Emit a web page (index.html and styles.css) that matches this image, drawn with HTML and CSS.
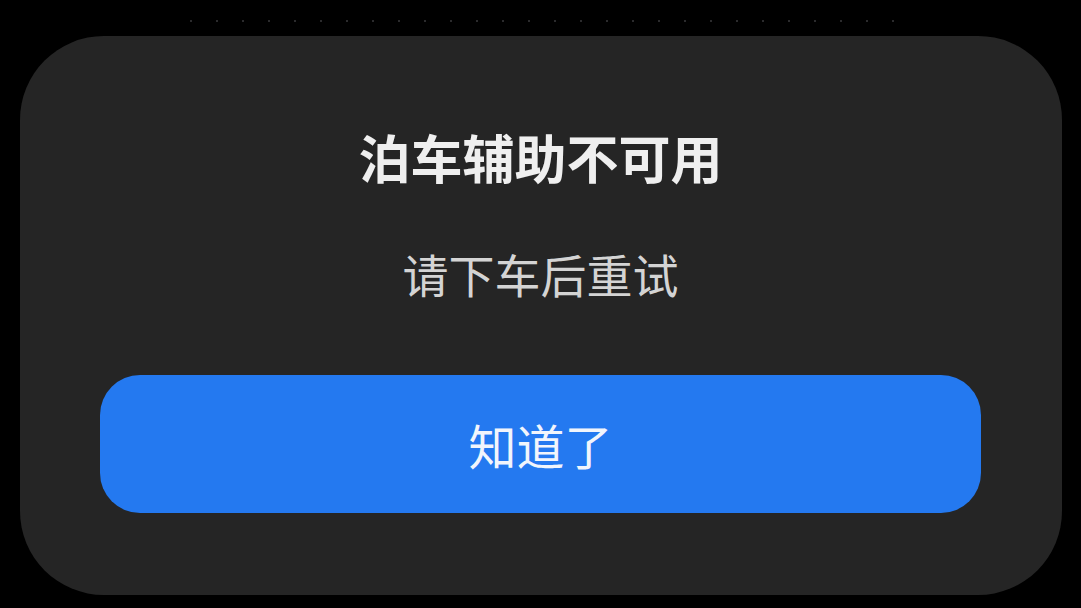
FILE: index.html
```html
<!DOCTYPE html>
<html lang="zh-CN">
<head>
<meta charset="utf-8">
<title>泊车辅助不可用</title>
<link rel="stylesheet" href="styles.css">
</head>
<body>
<div class="screen">
  <div class="dots">
    <span></span><span></span><span></span><span></span><span></span><span></span><span></span>
    <span></span><span></span><span></span><span></span><span></span><span></span><span></span>
    <span></span><span></span><span></span><span></span><span></span><span></span><span></span>
    <span></span><span></span><span></span><span></span><span></span><span></span><span></span>
  </div>
  <div class="dialog">
    <h1 class="title">泊车辅助不可用</h1>
    <p class="message">请下车后重试</p>
    <button class="confirm">知道了</button>
  </div>
</div>
</body>
</html>
```

FILE: styles.css
```css
html, body {
  margin: 0;
  padding: 0;
  background: #000;
  width: 1081px;
  height: 608px;
  overflow: hidden;
}

.screen {
  display: flex;
  flex-direction: column;
  align-items: stretch;
  padding-top: 20px;
  font-family: "Noto Sans CJK SC", "Noto Sans", sans-serif;
}

.dots {
  display: flex;
  justify-content: center;
  gap: 24px;
  height: 2px;
  padding-left: 2px;
}

.dots span {
  width: 2px;
  height: 2px;
  border-radius: 1px;
  background: #3a3a3c;
}

.dialog {
  margin: 14px 19px 0 20px;
  height: 559px;
  box-sizing: border-box;
  background: #252525;
  border-radius: 84px;
  display: flex;
  flex-direction: column;
  align-items: center;
  padding: 91px 81px 0 80px;
}

.title {
  margin: 0;
  font-size: 52px;
  line-height: 60px;
  font-weight: 700;
  color: #efefef;
  letter-spacing: 0;
}

.message {
  margin: 58px 0 0;
  font-size: 46px;
  line-height: 56px;
  font-weight: 400;
  color: #d4d4d4;
}

.confirm {
  margin-top: 74px;
  width: 100%;
  height: 138px;
  border: none;
  border-radius: 40px;
  background: #2479f0;
  color: #f1f5fc;
  font-family: inherit;
  font-size: 48px;
  font-weight: 400;
  line-height: 56px;
  padding: 0;
}
```
